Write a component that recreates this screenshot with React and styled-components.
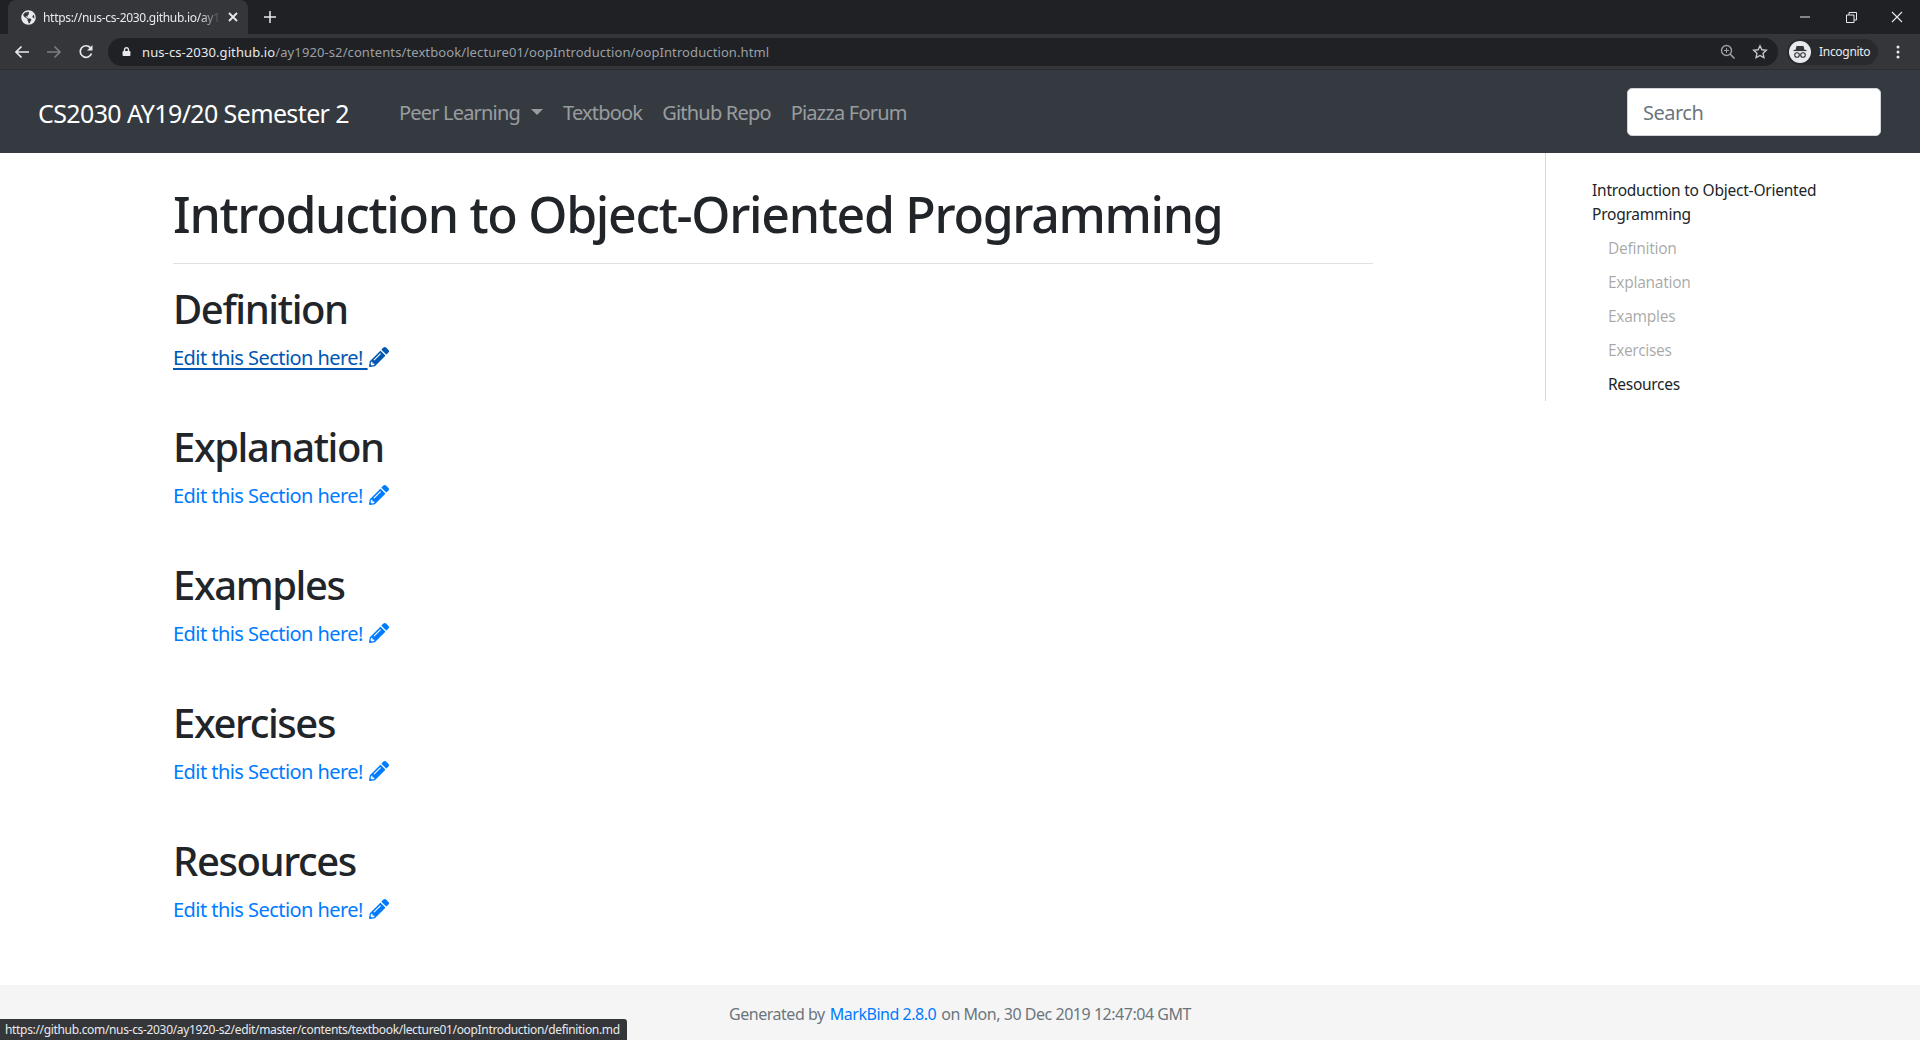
import React from 'react';
import styled, { createGlobalStyle } from 'styled-components';
import { FaPencilAlt, FaGlobeAmericas, FaLock } from 'react-icons/fa';

const GlobalStyle = createGlobalStyle`
  html, body {
    margin: 0;
    padding: 0;
    height: 100%;
    overflow: hidden;
    background: #fff;
    font-family: "Noto Sans", "Open Sans", sans-serif;
    color: #212529;
  }
`;

const Page = styled.div`
  height: 1040px;
  display: flex;
  flex-direction: column;
  position: relative;
  overflow: hidden;
`;

const TitleBar = styled.div`
  height: 34px;
  background: #202124;
  display: flex;
  align-items: flex-end;
  padding-left: 8px;
  flex-shrink: 0;
`;

const Tab = styled.div`
  width: 240px;
  height: 34px;
  box-sizing: border-box;
  background: #35363a;
  border-radius: 8px 8px 0 0;
  display: flex;
  align-items: center;
  padding: 0 10px 0 13px;
  gap: 7px;
  color: #e8eaed;
  font-size: 12px;
`;

const TabTitle = styled.span`
  flex: 1;
  white-space: nowrap;
  letter-spacing: -0.3px;
  mask-image: linear-gradient(to right, #000 88%, transparent 100%);
`;

const NewTab = styled.div`
  width: 40px;
  height: 34px;
  margin-left: 2px;
  display: flex;
  align-items: center;
  justify-content: center;
`;

const WindowControls = styled.div`
  margin-left: auto;
  height: 34px;
  display: flex;
  align-items: center;
`;

const WindowButton = styled.div`
  width: 46px;
  height: 28px;
  display: flex;
  align-items: center;
  justify-content: center;
`;

const Toolbar = styled.div`
  height: 36px;
  background: #35363a;
  display: flex;
  align-items: center;
  box-sizing: border-box;
  padding: 0 7px 0 10px;
  border-bottom: 1px solid #2c2d30;
  flex-shrink: 0;
`;

const NavIcon = styled.div`
  width: 32px;
  height: 28px;
  display: flex;
  align-items: center;
  justify-content: center;
  margin-left: ${(p) => p.$shift || 0}px;
`;

const Omnibox = styled.div`
  margin-left: 6px;
  width: 1670px;
  height: 28px;
  flex-shrink: 0;
  border-radius: 14px;
  background: #202124;
  display: flex;
  align-items: center;
  padding: 0 10px;
  box-sizing: border-box;
  font-size: 13px;
  letter-spacing: 0.1px;
  color: #9aa0a6;
  white-space: pre;
`;

const LockWrap = styled.span`
  display: flex;
  margin-left: 4px;
  margin-right: 11px;
  color: #e8eaed;
`;

const Host = styled.span`
  color: #e8eaed;
`;

const OmniActions = styled.div`
  margin-left: auto;
  display: flex;
  align-items: center;
  gap: 16px;
`;

const ProfileChip = styled.div`
  margin-left: 9px;
  width: 91px;
  height: 26px;
  flex-shrink: 0;
  border-radius: 13px;
  background: #292a2d;
  display: flex;
  align-items: center;
  gap: 8px;
  padding-left: 2px;
  box-sizing: border-box;
  color: #e8eaed;
  font-size: 12px;
  letter-spacing: -0.3px;
`;

const Avatar = styled.div`
  width: 22px;
  height: 22px;
  border-radius: 50%;
  background: #e8eaed;
  display: flex;
  align-items: center;
  justify-content: center;
`;

const MenuDots = styled.div`
  margin-left: 8px;
  width: 24px;
  display: flex;
  justify-content: center;
`;

const Navbar = styled.nav`
  height: 83px;
  box-sizing: border-box;
  background: #343a40;
  display: flex;
  align-items: center;
  padding: 1px 39px 0 38px;
  flex-shrink: 0;
`;

const Brand = styled.a`
  font-size: 25px;
  letter-spacing: -0.62px;
  color: #fff;
  margin-right: 50px;
  padding-top: 2px;
  white-space: nowrap;
`;

const NavLink = styled.a`
  color: rgba(255, 255, 255, 0.5);
  font-size: 20px;
  letter-spacing: -0.8px;
  margin-right: 20px;
  white-space: nowrap;
  display: flex;
  align-items: center;
`;

const Caret = styled.span`
  display: inline-block;
  margin-left: 11px;
  border-top: 6px solid rgba(255, 255, 255, 0.5);
  border-left: 6px solid transparent;
  border-right: 6px solid transparent;
`;

const SearchInput = styled.input`
  margin-left: auto;
  width: 254px;
  height: 48px;
  box-sizing: border-box;
  border: 1px solid #ced4da;
  border-radius: 5px;
  padding: 0 15px;
  font: inherit;
  font-size: 20px;
  letter-spacing: -0.5px;
  background: #fff;
  &::placeholder {
    color: #6c757d;
    opacity: 1;
  }
`;

const Body = styled.div`
  flex: 1;
  display: flex;
  min-height: 0;
`;

const Content = styled.main`
  width: 1200px;
  margin-left: 173px;
  flex-shrink: 0;
`;

const PageTitle = styled.h1`
  margin: 26px 0 0;
  padding-bottom: 14px;
  border-bottom: 1px solid #dee2e6;
  font-size: 50px;
  line-height: 70px;
  font-weight: 500;
  letter-spacing: -1.3px;
  white-space: nowrap;
`;

const Section = styled.section`
  height: 138px;
`;

const SectionTitle = styled.h2`
  margin: 0;
  padding-top: 18px;
  font-size: 40px;
  line-height: 54px;
  font-weight: 500;
  letter-spacing: -1.4px;
`;

const EditLink = styled.a`
  display: inline-flex;
  align-items: center;
  margin-top: 6px;
  height: 30px;
  font-size: 20px;
  letter-spacing: -0.55px;
  color: ${(p) => (p.$hover ? '#0056b3' : '#007bff')};
  text-decoration: ${(p) => (p.$hover ? 'underline' : 'none')};
  text-underline-offset: 3px;
  white-space: pre;
  svg {
    margin-left: 1px;
  }
`;

const Sidebar = styled.aside`
  margin-left: 172px;
  width: 375px;
  height: 248px;
  box-sizing: border-box;
  border-left: 1px solid #d6d6d6;
  padding: 25px 0 0 46px;
  font-size: 15.5px;
  letter-spacing: -0.22px;
  color: #212529;
`;

const TocTop = styled.div`
  line-height: 24px;
  width: 250px;
  margin-bottom: 10px;
`;

const TocItem = styled.div`
  line-height: 24px;
  margin: 0 0 10px 16px;
  letter-spacing: -0.3px;
  color: ${(p) => (p.$active ? '#212529' : 'rgba(0, 0, 0, 0.35)')};
`;

const Footer = styled.footer`
  height: 55px;
  box-sizing: border-box;
  flex-shrink: 0;
  background: #f5f5f5;
  display: flex;
  align-items: center;
  justify-content: center;
  font-size: 16px;
  letter-spacing: -0.47px;
  color: #6c757d;
  padding-top: 2px;
`;

const FooterLink = styled.a`
  color: #007bff;
  margin: 0 5px;
`;

const StatusBubble = styled.div`
  position: absolute;
  left: 0;
  bottom: 0;
  height: 21px;
  width: 627px;
  box-sizing: border-box;
  background: #35363a;
  border-radius: 0 3px 0 0;
  color: #e8eaed;
  font-size: 12px;
  letter-spacing: -0.33px;
  line-height: 21px;
  padding-left: 5px;
  white-space: nowrap;
  overflow: hidden;
`;

const sections = ['Definition', 'Explanation', 'Examples', 'Exercises', 'Resources'];

const IconSvg = ({ w = 16, h = 16, children }) => (
  <svg width={w} height={h} viewBox={`0 0 ${w} ${h}`} fill="none">
    {children}
  </svg>
);

export default function App() {
  return (
    <Page>
      <GlobalStyle />
      <TitleBar>
        <Tab>
          <FaGlobeAmericas size={15} color="#e8eaed" />
          <TabTitle>https://nus-cs-2030.github.io/ay1</TabTitle>
          <IconSvg w={10} h={10}>
            <path d="M1 1l8 8M9 1l-8 8" stroke="#e8eaed" strokeWidth="1.8" />
          </IconSvg>
        </Tab>
        <NewTab>
          <IconSvg w={12} h={12}>
            <path d="M6 0v12M0 6h12" stroke="#e8eaed" strokeWidth="1.5" />
          </IconSvg>
        </NewTab>
        <WindowControls>
          <WindowButton>
            <IconSvg w={10} h={2}>
              <path d="M0 1h10" stroke="#e8eaed" />
            </IconSvg>
          </WindowButton>
          <WindowButton>
            <IconSvg w={11} h={11}>
              <path d="M.5 3h7.500v7.500h-7.500zM3 3V.5h7.500V8H8" stroke="#e8eaed" />
            </IconSvg>
          </WindowButton>
          <WindowButton>
            <IconSvg w={12} h={12}>
              <path d="M1 1l10 10M11 1L1 11" stroke="#e8eaed" strokeWidth="1.1" />
            </IconSvg>
          </WindowButton>
        </WindowControls>
      </TitleBar>

      <Toolbar>
        <NavIcon $shift={-4}>
          <IconSvg w={16} h={14}>
            <path d="M15 7H2M7.500 1.500L2 7l5.500 5.500" stroke="#e8eaed" strokeWidth="1.7" />
          </IconSvg>
        </NavIcon>
        <NavIcon>
          <IconSvg w={16} h={14}>
            <path d="M1 7h13M8.500 1.500L14 7l-5.500 5.500" stroke="#7b7d80" strokeWidth="1.7" />
          </IconSvg>
        </NavIcon>
        <NavIcon>
          <IconSvg w={16} h={16}>
            <path d="M13.500 9.500A5.800 5.800 0 1 1 12.300 3.600" stroke="#e8eaed" strokeWidth="1.7" />
            <path d="M14.500 1v5.500H9z" fill="#e8eaed" />
          </IconSvg>
        </NavIcon>
        <Omnibox>
          <LockWrap>
            <FaLock size={9} />
          </LockWrap>
          <Host>nus-cs-2030.github.io</Host>
          /ay1920-s2/contents/textbook/lecture01/oopIntroduction/oopIntroduction.html
          <OmniActions>
            <IconSvg w={16} h={16}>
              <circle cx="6.500" cy="6.500" r="5" stroke="#9aa0a6" strokeWidth="1.4" />
              <path d="M10 10l4.500 4.500" stroke="#9aa0a6" strokeWidth="1.6" />
              <path d="M6.500 4v5M4 6.500h5" stroke="#9aa0a6" />
            </IconSvg>
            <IconSvg w={16} h={16}>
              <path d="M8 1.800l1.900 4 4.400.5-3.200 3 .8 4.400L8 11.500l-3.900 2.200.8-4.400-3.200-3 4.400-.5z" stroke="#c4c7ca" strokeWidth="1.4" />
            </IconSvg>
          </OmniActions>
        </Omnibox>
        <ProfileChip>
          <Avatar>
            <IconSvg w={16} h={16}>
              <path d="M4.500 2h7l1 4h-9z" fill="#35363a" />
              <path d="M1.500 6.500h13" stroke="#35363a" strokeWidth="1.2" />
              <circle cx="5" cy="11" r="2.300" stroke="#35363a" strokeWidth="1.100" />
              <circle cx="11" cy="11" r="2.300" stroke="#35363a" strokeWidth="1.100" />
              <path d="M7.300 11h1.400" stroke="#35363a" />
            </IconSvg>
          </Avatar>
          Incognito
        </ProfileChip>
        <MenuDots>
          <IconSvg w={4} h={14}>
            <circle cx="2" cy="2" r="1.500" fill="#e8eaed" />
            <circle cx="2" cy="7" r="1.500" fill="#e8eaed" />
            <circle cx="2" cy="12" r="1.500" fill="#e8eaed" />
          </IconSvg>
        </MenuDots>
      </Toolbar>

      <Navbar>
        <Brand>CS2030 AY19/20 Semester 2</Brand>
        <NavLink>
          Peer Learning
          <Caret />
        </NavLink>
        <NavLink>Textbook</NavLink>
        <NavLink>Github Repo</NavLink>
        <NavLink>Piazza Forum</NavLink>
        <SearchInput placeholder="Search" />
      </Navbar>

      <Body>
        <Content>
          <PageTitle>Introduction to Object-Oriented Programming</PageTitle>
          {sections.map((name, i) => (
            <Section key={name}>
              <SectionTitle>{name}</SectionTitle>
              <EditLink $hover={i === 0}>
                Edit this Section here! <FaPencilAlt size={20} />
              </EditLink>
            </Section>
          ))}
        </Content>
        <Sidebar>
          <TocTop>Introduction to Object-Oriented Programming</TocTop>
          {sections.map((name) => (
            <TocItem key={name} $active={name === 'Resources'}>
              {name}
            </TocItem>
          ))}
        </Sidebar>
      </Body>

      <Footer>
        Generated by<FooterLink>MarkBind 2.8.0</FooterLink>on Mon, 30 Dec 2019 12:47:04 GMT
      </Footer>
      <StatusBubble>
        https://github.com/nus-cs-2030/ay1920-s2/edit/master/contents/textbook/lecture01/oopIntroduction/definition.md
      </StatusBubble>
    </Page>
  );
}
